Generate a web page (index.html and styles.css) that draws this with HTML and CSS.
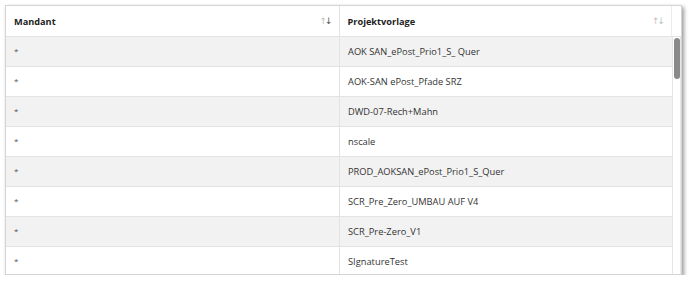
FILE: index.html
```html
<!DOCTYPE html>
<html lang="de">
<head>
<meta charset="utf-8">
<link rel="stylesheet" href="styles.css">
</head>
<body>
<div class="panel">
  <div class="head">
    <div class="hcell c1"><span>Mandant</span><span class="sort"><span class="up">↑</span><span class="down active">↓</span></span></div>
    <div class="hcell c2"><span>Projektvorlage</span><span class="sort"><span class="up">↑</span><span class="down">↓</span></span></div>
    <div class="hgutter"></div>
  </div>
  <div class="bodywrap">
    <div class="rows">
      <div class="row alt"><div class="cell c1"><span class="star">*</span></div><div class="cell c2">AOK SAN_ePost_Prio1_S_ Quer</div></div>
      <div class="row"><div class="cell c1"><span class="star">*</span></div><div class="cell c2">AOK-SAN ePost_Pfade SRZ</div></div>
      <div class="row alt"><div class="cell c1"><span class="star">*</span></div><div class="cell c2">DWD-07-Rech+Mahn</div></div>
      <div class="row"><div class="cell c1"><span class="star">*</span></div><div class="cell c2">nscale</div></div>
      <div class="row alt"><div class="cell c1"><span class="star">*</span></div><div class="cell c2">PROD_AOKSAN_ePost_Prio1_S_Quer</div></div>
      <div class="row"><div class="cell c1"><span class="star">*</span></div><div class="cell c2">SCR_Pre_Zero_UMBAU AUF V4</div></div>
      <div class="row alt"><div class="cell c1"><span class="star">*</span></div><div class="cell c2">SCR_Pre-Zero_V1</div></div>
      <div class="row last"><div class="cell c1"><span class="star">*</span></div><div class="cell c2">SIgnatureTest</div></div>
    </div>
    <div class="scrollbar"><div class="thumb"></div></div>
  </div>
</div>
</body>
</html>
```
FILE: styles.css
```css
html, body {
  margin: 0;
  padding: 0;
  background: #ffffff;
}
body {
  padding: 5px 0 0 5px;
  font-family: "Open Sans", "Noto Sans", sans-serif;
  font-size: 9.3px;
  color: #333333;
}
.panel {
  width: 675px;
  height: 268px;
  border: 1px solid #d4d4d4;
  background: #ffffff;
  box-shadow: 2px 2px 4px rgba(0, 0, 0, 0.4);
  overflow: hidden;
  display: flex;
  flex-direction: column;
}
.head {
  display: flex;
  height: 30px;
  border-bottom: 1px solid #e3e3e3;
  flex: none;
}
.hcell {
  display: flex;
  align-items: center;
  justify-content: space-between;
  font-size: 9.2px;
  font-weight: 700;
  color: #222222;
  padding: 0 6px 0 8px;
  box-sizing: border-box;
}
.c1 {
  width: 334px;
  border-right: 1px solid #e3e3e3;
}
.c2 {
  width: 332px;
}
.hgutter {
  width: 9px;
  border-left: 1px solid #ececec;
}
.sort {
  font-family: "DejaVu Sans", sans-serif;
  font-size: 9px;
  font-weight: 400;
  letter-spacing: -2px;
  color: #c0c0c0;
  padding-right: 2px;
}
.sort .active {
  color: #555555;
}
.bodywrap {
  display: flex;
  flex: 1;
  min-height: 0;
}
.rows {
  width: 666px;
  overflow: hidden;
}
.row {
  display: flex;
  height: 29px;
  border-bottom: 1px solid #e3e3e3;
}
.row.alt {
  background: #f2f2f2;
}
.cell {
  display: flex;
  align-items: center;
  padding-left: 8px;
  box-sizing: border-box;
  color: #333333;
}
.star {
  font-size: 8px;
  color: #555555;
  margin-top: -3px;
}
.scrollbar {
  width: 7px;
  border-left: 1px solid #e6e6e6;
  border-right: 1px solid #e6e6e6;
  background: #ffffff;
}
.thumb {
  width: 6px;
  margin: 1px 0 0 1px;
  height: 41px;
  background: #8a8a8a;
  border-radius: 3px;
}
```
